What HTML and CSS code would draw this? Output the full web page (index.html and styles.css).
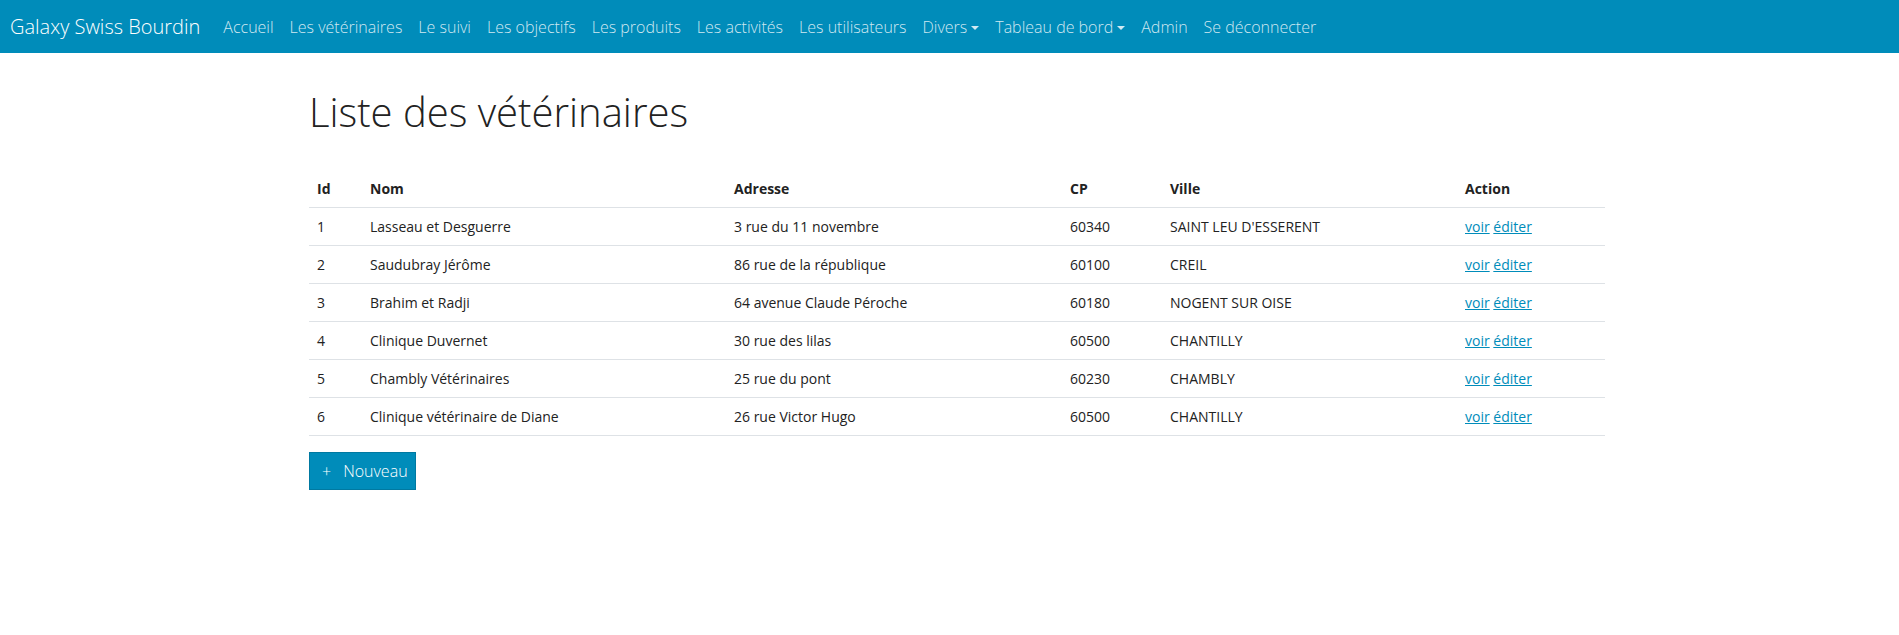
FILE: index.html
```html
<!DOCTYPE html>
<html lang="fr">
<head>
<meta charset="utf-8">
<title>Liste des vétérinaires</title>
<link rel="stylesheet" href="styles.css">
</head>
<body>
<nav class="navbar">
  <a class="brand" href="#">Galaxy Swiss Bourdin</a>
  <ul class="nav">
    <li><a class="nav-link" href="#">Accueil</a></li>
    <li><a class="nav-link" href="#">Les vétérinaires</a></li>
    <li><a class="nav-link" href="#">Le suivi</a></li>
    <li><a class="nav-link" href="#">Les objectifs</a></li>
    <li><a class="nav-link" href="#">Les produits</a></li>
    <li><a class="nav-link" href="#">Les activités</a></li>
    <li><a class="nav-link" href="#">Les utilisateurs</a></li>
    <li><a class="nav-link dropdown" href="#">Divers</a></li>
    <li><a class="nav-link dropdown" href="#">Tableau de bord</a></li>
    <li><a class="nav-link" href="#">Admin</a></li>
    <li><a class="nav-link" href="#">Se déconnecter</a></li>
  </ul>
</nav>
<main class="container">
  <h1 class="title">Liste des vétérinaires</h1>
  <table class="table">
    <colgroup>
      <col class="c-id"><col class="c-nom"><col class="c-adr"><col class="c-cp"><col class="c-ville"><col class="c-action">
    </colgroup>
    <thead>
      <tr><th>Id</th><th>Nom</th><th>Adresse</th><th>CP</th><th>Ville</th><th>Action</th></tr>
    </thead>
    <tbody>
      <tr><td>1</td><td>Lasseau et Desguerre</td><td>3 rue du 11 novembre</td><td>60340</td><td>SAINT LEU D'ESSERENT</td><td><a href="#">voir</a> <a href="#">éditer</a></td></tr>
      <tr><td>2</td><td>Saudubray Jérôme</td><td>86 rue de la république</td><td>60100</td><td>CREIL</td><td><a href="#">voir</a> <a href="#">éditer</a></td></tr>
      <tr><td>3</td><td>Brahim et Radji</td><td>64 avenue Claude Péroche</td><td>60180</td><td>NOGENT SUR OISE</td><td><a href="#">voir</a> <a href="#">éditer</a></td></tr>
      <tr><td>4</td><td>Clinique Duvernet</td><td>30 rue des lilas</td><td>60500</td><td>CHANTILLY</td><td><a href="#">voir</a> <a href="#">éditer</a></td></tr>
      <tr><td>5</td><td>Chambly Vétérinaires</td><td>25 rue du pont</td><td>60230</td><td>CHAMBLY</td><td><a href="#">voir</a> <a href="#">éditer</a></td></tr>
      <tr><td>6</td><td>Clinique vétérinaire de Diane</td><td>26 rue Victor Hugo</td><td>60500</td><td>CHANTILLY</td><td><a href="#">voir</a> <a href="#">éditer</a></td></tr>
    </tbody>
  </table>
  <a class="btn" href="#"><span class="plus">+</span>Nouveau</a>
</main>
</body>
</html>
```
FILE: styles.css
```css
* { box-sizing: border-box; }
html, body { margin: 0; padding: 0; }
body {
  font-family: "Open Sans", "Liberation Sans", sans-serif;
  font-size: 14px;
  line-height: 1.5;
  color: #222;
  background: #fff;
}
a { color: #008cba; }

.navbar {
  display: flex;
  align-items: center;
  height: 53px;
  padding: 0 10px;
  background: #008cba;
}
.brand {
  font-size: 20px;
  font-weight: 300;
  color: #fff;
  text-decoration: none;
  margin-right: 15px;
  white-space: nowrap;
}
.nav {
  display: flex;
  list-style: none;
  margin: 0;
  padding: 0;
}
.nav-link {
  display: block;
  padding: 0 8px;
  font-size: 16px;
  font-weight: 300;
  color: rgba(255, 255, 255, 0.82);
  text-decoration: none;
  white-space: nowrap;
}
.dropdown::after {
  content: "";
  display: inline-block;
  margin-left: 4px;
  vertical-align: 3px;
  border-top: 4px solid;
  border-left: 4px solid transparent;
  border-right: 4px solid transparent;
}

.container {
  width: 1296px;
  margin-left: 309px;
}
.title {
  font-size: 40px;
  font-weight: 300;
  line-height: 1.2;
  margin: 35px 0 34px;
  color: #222;
}
.table {
  width: 100%;
  border-collapse: collapse;
}
.c-id { width: 53px; }
.c-nom { width: 364px; }
.c-adr { width: 336px; }
.c-cp { width: 100px; }
.c-ville { width: 295px; }
.c-action { width: 148px; }
.table th, .table td {
  padding: 8px;
  text-align: left;
  border-bottom: 1px solid #dee2e6;
  vertical-align: top;
}
.table th { font-weight: 700; }

.btn {
  display: inline-block;
  margin-top: 16px;
  height: 38px;
  padding: 0 7px 0 12px;
  line-height: 36px;
  font-size: 16px;
  font-weight: 300;
  color: #fff;
  background: #008cba;
  border: 1px solid #0079a1;
  text-decoration: none;
}
.plus { margin-right: 12px; }
```
